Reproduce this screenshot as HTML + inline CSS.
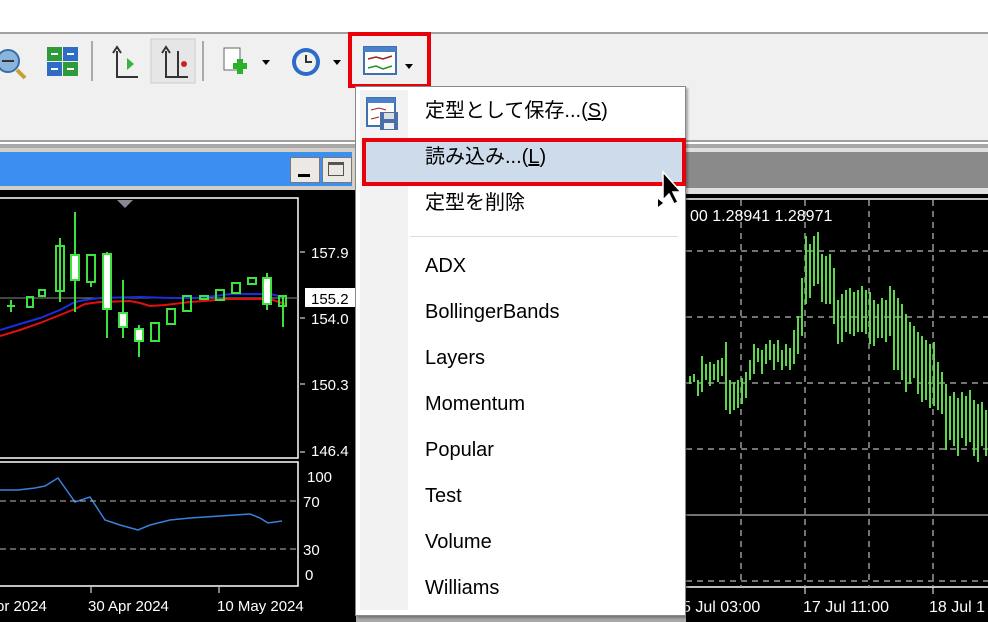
<!DOCTYPE html>
<html><head><meta charset="utf-8"><style>
body{margin:0;width:988px;height:622px;overflow:hidden;background:#fff;position:relative;font-family:"Liberation Sans","Noto Sans CJK JP",sans-serif}
.a{position:absolute}
.mi{position:absolute;left:425px;font-size:20px;color:#000;line-height:24px}
</style></head><body>
<div class="a" style="left:0;top:32px;width:988px;height:54px;background:#f0f0f0;border-top:2px solid #a0a0a0;border-bottom:2px solid #a0a0a0"></div>
<div class="a" style="left:0;top:88px;width:988px;height:52px;background:#f0f0f0;border-bottom:2px solid #a0a0a0"></div>
<div class="a" style="left:0;top:144px;width:988px;height:478px;background:#a8a8a8"></div>
<div class="a" style="left:0;top:148px;width:356px;height:474px;background:#d4d0c8"></div>
<div class="a" style="left:0;top:152px;width:352px;height:34px;background:#3a8ff0"></div>
<div class="a" style="left:290px;top:157px;width:28px;height:24px;background:#ece9e4;border:1px solid #777"><div class="a" style="left:7px;top:16px;width:12px;height:3px;background:#000"></div></div>
<div class="a" style="left:322px;top:157px;width:28px;height:24px;background:#ece9e4;border:1px solid #777"><div class="a" style="left:5px;top:4px;width:16px;height:14px;border:1px solid #555;border-top:3px solid #555;box-sizing:border-box"></div></div>
<div class="a" style="left:686px;top:148px;width:302px;height:474px;background:#e0e0e0"></div>
<div class="a" style="left:686px;top:152px;width:302px;height:36px;background:#8a8a8a"></div>
<svg class="a" style="left:0;top:190px" width="356" height="432">
<rect width="356" height="432" fill="#000"/>
<rect x="-2" y="8" width="300" height="260" fill="none" stroke="#fff" stroke-width="1.5"/>
<rect x="-2" y="272" width="300" height="124" fill="none" stroke="#fff" stroke-width="1.5"/>
<polygon points="117,10 133,10 125,18" fill="#889"/>
<line x1="0" y1="108" x2="298" y2="108" stroke="#888"/>
<polyline points="0,140 20,134 40,128 60,120 75,112 85,110 100,108 140,107 170,108 200,108 230,104 270,104 283,107" fill="none" stroke="#1a2ee0" stroke-width="2"/>
<polyline points="0,146 20,140 40,133 60,125 75,119 85,114 100,112 130,111 140,113 150,116 165,115 190,112 230,109 270,109 285,114" fill="none" stroke="#e01010" stroke-width="2"/>
<g stroke="#3ee23e" stroke-width="2" fill="none">
<line x1="11" y1="110" x2="11" y2="122"/><line x1="7" y1="116" x2="15" y2="116"/>
<rect x="27" y="107" width="6" height="10"/><rect x="39" y="100" width="6" height="6"/>
<rect x="56" y="56" width="8" height="45"/><line x1="60" y1="48" x2="60" y2="112"/>
<line x1="75" y1="22" x2="75" y2="122"/><rect x="71" y="65" width="8" height="25" fill="#fff"/>
<rect x="87" y="65" width="8" height="27"/><line x1="91" y1="92" x2="91" y2="97"/>
<line x1="107" y1="62" x2="107" y2="148"/><rect x="103" y="64" width="8" height="55" fill="#fff"/>
<line x1="123" y1="90" x2="123" y2="148"/><rect x="119" y="123" width="8" height="14" fill="#fff"/>
<line x1="139" y1="135" x2="139" y2="167"/><rect x="135" y="139" width="8" height="12" fill="#fff"/>
<rect x="151" y="133" width="8" height="18"/>
<rect x="167" y="119" width="8" height="15"/>
<rect x="183" y="106" width="8" height="15"/>
<rect x="200" y="106" width="8" height="3"/><rect x="216" y="100" width="8" height="10"/>
<rect x="232" y="93" width="8" height="10"/><rect x="248" y="88" width="8" height="6"/>
<line x1="267" y1="83" x2="267" y2="120"/><rect x="263" y="88" width="8" height="26" fill="#fff"/>
<line x1="283" y1="106" x2="283" y2="137"/><rect x="279" y="106" width="7" height="10"/>
</g>
<polyline points="0,300 18,300 35,298 45,296 58,288 75,312 90,307 105,330 120,335 138,340 150,335 170,330 190,328 220,326 250,324 260,328 268,333 282,331" fill="none" stroke="#3a80e0" stroke-width="1.5"/>
<line x1="0" y1="311" x2="298" y2="311" stroke="#bbb" stroke-dasharray="6,4"/>
<line x1="0" y1="359" x2="298" y2="359" stroke="#bbb" stroke-dasharray="6,4"/>
<g fill="#fff" font-family="Liberation Sans" font-size="15">
<text x="311" y="68">157.9</text><rect x="305" y="98" width="51" height="19" fill="#fff"/><text x="311" y="114" fill="#000">155.2</text>
<text x="311" y="134">154.0</text><text x="311" y="200">150.3</text><text x="311" y="266">146.4</text>
<text x="307" y="292">100</text><text x="303" y="317">70</text><text x="303" y="365">30</text><text x="305" y="390">0</text>
<text x="-4" y="421">pr 2024</text><text x="88" y="421">30 Apr 2024</text><text x="217" y="421">10 May 2024</text>
</g>
<g stroke="#fff"><line x1="91" y1="397" x2="91" y2="403"/><line x1="219" y1="397" x2="219" y2="403"/><line x1="300" y1="62" x2="305" y2="62"/><line x1="300" y1="128" x2="305" y2="128"/><line x1="300" y1="194" x2="305" y2="194"/><line x1="300" y1="262" x2="305" y2="262"/></g>
</svg>
<svg class="a" style="left:686px;top:194px" width="302" height="428">
<rect width="302" height="428" fill="#000"/>
<line x1="0" y1="5" x2="302" y2="5" stroke="#fff" stroke-width="1.5"/>
<line x1="0" y1="393" x2="302" y2="393" stroke="#fff" stroke-width="1.5"/>
<g stroke="#999" stroke-dasharray="6,5" stroke-width="1.5">
<line x1="55" y1="6" x2="55" y2="393"/><line x1="119" y1="6" x2="119" y2="393"/><line x1="183" y1="6" x2="183" y2="393"/><line x1="247" y1="6" x2="247" y2="393"/>
<line x1="0" y1="57" x2="302" y2="57"/><line x1="0" y1="123" x2="302" y2="123"/><line x1="0" y1="189" x2="302" y2="189"/><line x1="0" y1="255" x2="302" y2="255"/><line x1="0" y1="387" x2="302" y2="387"/>
</g>
<line x1="0" y1="321" x2="302" y2="321" stroke="#999" stroke-width="1.5"/>
<g stroke="#5cd84a" stroke-width="2">
<path d="M4 182V190M8 180V188M12 186V202M16 162V198M20 170V186M24 168V192M28 170V186M32 166V188M36 164V182M40 148V216M44 186V220M48 188V216M52 186V214M56 184V210M60 178V204M64 166V186M68 150V180M72 154V168M76 156V180M80 150V170M84 146V166M88 150V176M92 146V168M96 156V176M100 150V172M104 154V176M108 136V170M112 122V160M116 84V142M120 42V110M124 50V104M128 42V92M132 38V90M136 60V108M140 62V110M144 60V110M148 74V130M152 106V150M156 100V148M160 96V138M164 94V140M168 98V142M172 96V138M176 92V138M180 96V140M184 98V150M188 106V152M192 110V144M196 104V144M200 106V148M204 92V142M208 96V176M212 104V176M216 110V186M220 120V198M224 128V190M228 132V184M232 138V200M236 142V208M240 146V206M244 150V214M248 148V212M252 168V216M256 178V220M260 190V256M264 202V246M268 198V252M272 204V262M276 198V244M280 202V252M284 196V248M288 206V262M292 210V268M296 208V252M300 216V262"/>
</g>
<g fill="#fff" font-family="Liberation Sans" font-size="16">
<text x="4" y="27">00 1.28941 1.28971</text>
<text x="-4" y="418">5 Jul 03:00</text><text x="117" y="418">17 Jul 11:00</text><text x="243" y="418">18 Jul 1</text>
</g>
<g stroke="#fff"><line x1="119" y1="393" x2="119" y2="400"/><line x1="247" y1="393" x2="247" y2="400"/></g>
</svg>
<svg class="a" style="left:0;top:36px" width="440" height="50">
<circle cx="8" cy="25" r="11" fill="#8ab4dc" stroke="#3a6ea8" stroke-width="2"/><line x1="2" y1="25" x2="14" y2="25" stroke="#333" stroke-width="2"/><line x1="17" y1="34" x2="25" y2="42" stroke="#c8a030" stroke-width="4"/>
<rect x="47" y="11" width="15" height="14" fill="#2e9b3a"/><rect x="63" y="11" width="15" height="14" fill="#2f6cc4"/><rect x="47" y="26" width="15" height="14" fill="#2f6cc4"/><rect x="63" y="26" width="15" height="14" fill="#2e9b3a"/>
<g fill="#fff"><rect x="51" y="17" width="7" height="2"/><rect x="67" y="17" width="7" height="2"/><rect x="51" y="32" width="7" height="2"/><rect x="67" y="32" width="7" height="2"/></g>
<line x1="92" y1="5" x2="92" y2="45" stroke="#aaa" stroke-width="2"/>
<path d="M117 15V41H138M113 17L117 11L121 17" stroke="#333" stroke-width="2" fill="none"/><polygon points="127,22 134,28 127,34" fill="#3bb33b"/>
<rect x="151" y="3" width="44" height="44" fill="#e6e6e6" stroke="#ccc"/>
<path d="M166 15V41H188M162 17L166 11L170 17M178 15V40" stroke="#333" stroke-width="2" fill="none"/><circle cx="184" cy="28" r="3" fill="#d02020"/>
<line x1="203" y1="5" x2="203" y2="45" stroke="#aaa" stroke-width="2"/>
<rect x="224" y="12" width="16" height="22" fill="#fff" stroke="#666"/><path d="M233 30H247M240 23V38" stroke="#2bb02b" stroke-width="6"/>
<polygon points="262,24 270,24 266,29" fill="#000"/>
<circle cx="306" cy="26" r="14" fill="#2a6cc8"/><circle cx="306" cy="26" r="10" fill="#f0f0f0"/><path d="M306 19V26H312" stroke="#333" stroke-width="2" fill="none"/>
<polygon points="333,24 341,24 337,29" fill="#000"/>
<rect x="364" y="11" width="32" height="27" fill="#fff" stroke="#4070b0" stroke-width="2"/><rect x="364" y="11" width="32" height="5" fill="#4a80c8"/>
<path d="M368 23L376 21L383 23L392 20" stroke="#a02020" fill="none" stroke-width="1.5"/><path d="M368 32L376 30L383 33L392 30" stroke="#209020" fill="none" stroke-width="1.5"/>
<polygon points="405,28 413,28 409,33" fill="#000"/>
</svg>
<div class="a" style="left:348px;top:32px;width:75px;height:48px;border:4px solid #e8000a"></div>
<div class="a" style="left:355px;top:86px;width:329px;height:528px;background:#fff;border:1px solid #888;box-shadow:2px 2px 2px rgba(0,0,0,.3)"></div>
<div class="a" style="left:360px;top:90px;width:48px;height:520px;background:#f2f2f2"></div>
<div class="a" style="left:410px;top:236px;width:268px;height:1px;background:#ddd"></div>
<svg class="a" style="left:366px;top:96px" width="38" height="36"><rect x="1" y="2" width="28" height="28" fill="#fff" stroke="#4070b0" stroke-width="2"/><rect x="1" y="2" width="28" height="5" fill="#4a80c8"/><path d="M5 14L13 12L20 14M5 23L13 21" stroke="#a02020" fill="none"/><rect x="14" y="16" width="18" height="18" fill="#4a6fa8"/><rect x="18" y="17" width="10" height="6" fill="#ddd"/><rect x="18" y="27" width="10" height="6" fill="#eee"/></svg>
<div class="a" style="left:362px;top:138px;width:316px;height:40px;background:#cddbeb;border:4px solid #e8000a"></div>
<div class="mi" style="top:99px">定型として保存...(<u>S</u>)</div>
<div class="mi" style="top:145px">読み込み...(<u>L</u>)</div>
<div class="mi" style="top:191px">定型を削除</div>
<div class="a" style="left:658px;top:199px;width:0;height:0;border-top:4px solid transparent;border-bottom:4px solid transparent;border-left:5px solid #000"></div>
<svg class="a" style="left:660px;top:170px" width="26" height="40"><path d="M3 2V30L9 24L14 34L18 32L13 22L21 22Z" fill="#000" stroke="#fff" stroke-width="1.5"/></svg>
<div class="mi" style="top:254px">ADX</div>
<div class="mi" style="top:300px">BollingerBands</div>
<div class="mi" style="top:346px">Layers</div>
<div class="mi" style="top:392px">Momentum</div>
<div class="mi" style="top:438px">Popular</div>
<div class="mi" style="top:484px">Test</div>
<div class="mi" style="top:530px">Volume</div>
<div class="mi" style="top:576px">Williams</div>
</body></html>
